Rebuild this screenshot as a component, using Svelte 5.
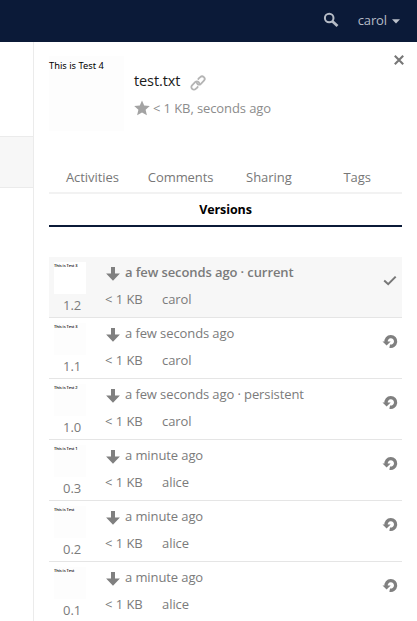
<script>
  const tabs = ['Activities', 'Comments', 'Sharing', 'Tags'];
  const versions = [
    { id: '1.2', preview: 'This is Test 3', when: 'a few seconds ago · current', author: 'carol', current: true },
    { id: '1.1', preview: 'This is Test 3', when: 'a few seconds ago', author: 'carol' },
    { id: '1.0', preview: 'This is Test 2', when: 'a few seconds ago · persistent', author: 'carol' },
    { id: '0.3', preview: 'This is Test 1', when: 'a minute ago', author: 'alice' },
    { id: '0.2', preview: 'This is Test', when: 'a minute ago', author: 'alice' },
    { id: '0.1', preview: 'This is Test', when: 'a minute ago', author: 'alice' }
  ];
</script>

<div class="app">
  <header>
    <svg class="search" width="16" height="16" viewBox="0 0 16 16"><circle cx="6.2" cy="6" r="4.3" fill="none" stroke="#b6bcc6" stroke-width="2" /><path d="M9.3 9.2l5.2 4.9" stroke="#b6bcc6" stroke-width="2.7" /></svg>
    <span class="user">carol</span>
    <svg class="caret" width="8" height="5" viewBox="0 0 8 5"><path d="M0 .3h8L4 4.5z" fill="#bcc1ca" /></svg>
  </header>
  <div class="body">
    <div class="files"><div class="selected"></div></div>
    <aside>
      <svg class="close" width="10" height="10" viewBox="0 0 10 10"><path d="M.8 .8l8.4 8.4M9.2 .8L.8 9.2" stroke="#777" stroke-width="2.1" /></svg>
      <div class="info">
        <div class="thumb">This is Test 4</div>
        <div class="details">
          <div class="name"><span>test.txt</span>
            <svg width="16" height="16" viewBox="0 0 16 16"><g fill="none" stroke="#b4b4b4" stroke-width="1.8" transform="rotate(-45 8 8)"><path d="M3.8 10.6H2.2a2.5 2.5 0 0 1-2.5-2.5V7.9a2.5 2.5 0 0 1 2.5-2.5h4.3A2.5 2.5 0 0 1 9 7.9a2.5 2.5 0 0 1-1 2" /><path d="M12.2 5.4h1.6a2.5 2.5 0 0 1 2.5 2.5v.2a2.5 2.5 0 0 1-2.5 2.5H9.5A2.5 2.5 0 0 1 7 8.1a2.5 2.5 0 0 1 1-2" /><path d="M3.5 10.6h2.2M10.3 5.4h2.2" /></g></svg>
          </div>
          <div class="meta">
            <svg width="16" height="16" viewBox="0 0 16 16"><path d="M8 .4l2.2 5.2 5.6.5-4.2 3.7 1.3 5.5L8 12.4l-4.9 2.9 1.3-5.5L.2 6.1l5.6-.5z" fill="#a3a3a3" /></svg>
            <span>&lt; 1 KB, seconds ago</span>
          </div>
        </div>
      </div>
      <nav>
        {#each tabs as tab}<span class={tab.toLowerCase()}>{tab}</span>{/each}
      </nav>
      <div class="active-tab"><b>Versions</b></div>
      <ul>
        {#each versions as v}
          <li class:current={v.current}>
            <div class="left"><div class="preview"><span>{v.preview}</span></div><div class="id">{v.id}</div></div>
            <div class="main">
              <div class="when">
                <svg width="14" height="14" viewBox="0 0 14 14"><path d="M5 0h4v6.5h4.9L7 13.7.1 6.5H5z" fill="#808080" /></svg>
                <span>{v.when}</span>
              </div>
              <div class="sub"><span class="size">&lt; 1 KB</span><span>{v.author}</span></div>
            </div>
            {#if v.current}
              <svg class="action" width="16" height="16" viewBox="0 0 16 16"><path d="M2.2 8.4l4 3.8 7.5-7.6" fill="none" stroke="#777" stroke-width="2" /></svg>
            {:else}
              <svg class="action" width="16" height="16" viewBox="0 0 16 16"><path d="M4.1 9.2A4.8 4.8 0 1 1 7.7 13.1" fill="none" stroke="#808080" stroke-width="3.3" /><path d="M.5 8.6h8.2L4.6 12.6z" fill="#808080" /></svg>
            {/if}
          </li>
        {/each}
      </ul>
    </aside>
  </div>
</div>

<style>
  .app { width: 417px; height: 621px; overflow: hidden; background: #fff; font-family: "Open Sans", sans-serif; font-size: 13px; line-height: 20px; color: #7b7b7b; display: flex; flex-direction: column; }
  svg { display: block; flex: none; overflow: visible; }
  header { height: 42px; flex: none; background: #0b1a38; display: flex; align-items: center; justify-content: flex-end; box-sizing: border-box; padding: 0 17px 2px 0; color: #b6bcc6; }
  .search { margin-right: 19px; }
  .user { letter-spacing: -0.1px; }
  .caret { margin: 2px 0 0 5px; }
  .body { flex: 1; min-height: 0; display: flex; }
  .files { width: 33px; box-sizing: border-box; padding-top: 94px; flex: none; }
  .selected { height: 50px; background: #f7f7f7; border-top: 1px solid #ebebeb; border-bottom: 1px solid #ebebeb; }
  aside { position: relative; flex: 1; border-left: 1px solid #ebebeb; padding: 14px 15px 0; overflow: hidden; }
  .close { position: absolute; top: 13px; right: 13px; }
  .info { display: flex; height: 111px; }
  .thumb { width: 75px; height: 75px; background: #fdfdfd; color: #000; font-family: "Noto Sans", sans-serif; font-size: 9.3px; line-height: 19px; white-space: nowrap; }
  .details { padding: 15px 0 0 10px; }
  .name { display: flex; align-items: center; gap: 10px; height: 20px; font-size: 14.5px; letter-spacing: -0.1px; color: #1c1c1c; }
  .name svg { margin-top: 3px; }
  .meta { display: flex; align-items: center; gap: 3px; margin-top: 7px; color: #8c8c8c; letter-spacing: -0.1px; }
  nav { display: flex; height: 25px; border-bottom: 2px solid #f2f2f2; line-height: 20px; color: #777; white-space: nowrap; }
  nav span { text-align: center; letter-spacing: -0.06px; }
  .activities { width: 87px; }
  .comments { width: 90px; }
  .sharing { width: 87px; }
  .tags { width: 90px; }
  .active-tab { height: 31px; line-height: 31px; border-bottom: 2px solid #0b1a38; text-align: center; color: #000; font-size: 12.5px; letter-spacing: -0.1px; }
  .active-tab b { font-weight: 700; }
  ul { list-style: none; padding: 0; margin: 30px 0 0; }
  li { display: flex; height: 60px; border-bottom: 1px solid #e5e5e5; }
  .current { background: #f7f7f7; }
  .left { width: 32px; padding: 5px 24px 0 5px; }
  .preview { width: 32px; height: 32px; background: #fdfdfd; color: #000; white-space: nowrap; line-height: 7px; }
  .current .preview { background: #fff; }
  .preview span { display: block; font-size: 4px; font-weight: 600; letter-spacing: -0.06px; }
  .id { padding-left: 9px; margin-top: 1px; }
  .main { flex: 1; }
  .when { display: flex; align-items: center; height: 20px; padding-top: 5px; gap: 5px; white-space: nowrap; }
  .when svg { margin: 4px 0 0 -4px; }
  .when span { letter-spacing: -0.1px; }
  .current .when span { font-weight: 600; }
  .sub { display: flex; padding-top: 7px; margin-left: -5px; letter-spacing: -0.06px; }
  .size { width: 57px; }
  .action { margin: 15px 4px 0 0; }
</style>
